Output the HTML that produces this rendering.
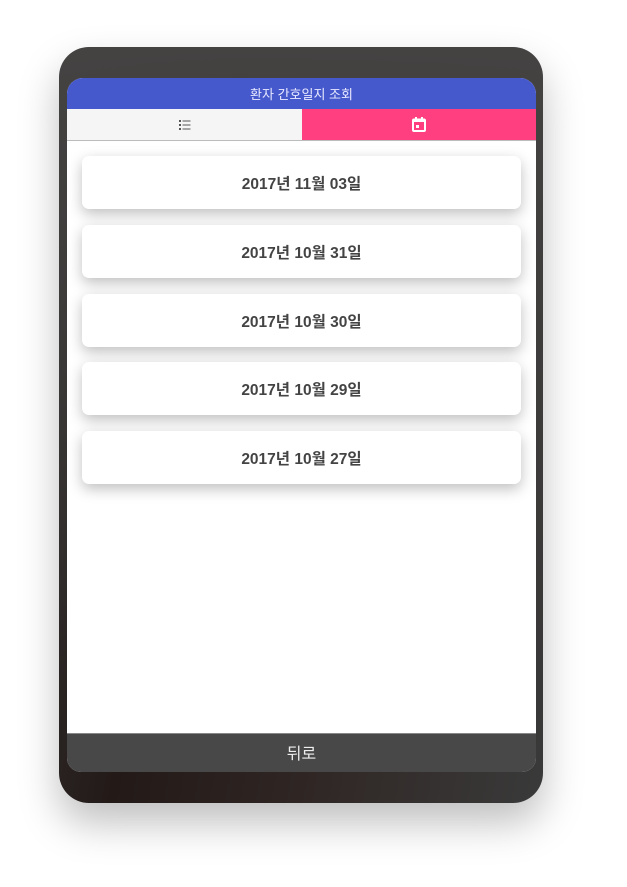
<!DOCTYPE html><html><head><meta charset="utf-8"><style>
body{margin:0;width:627px;height:887px;background:#fff;position:relative;overflow:hidden;font-family:"Liberation Sans","Noto Sans CJK KR",sans-serif}
.dev{position:absolute;left:59px;top:47px;width:484px;height:756px;border-radius:30px;background:linear-gradient(180deg,rgba(68,67,66,1) 0%,rgba(68,67,66,0.6) 40%,rgba(68,67,66,0) 85%),linear-gradient(100deg,#333 0%,#231a18 30%,#2f2624 60%,#3a3a3a 100%);box-shadow:0 20px 40px rgba(0,0,0,.25)}
.scr{position:absolute;left:67px;top:78px;width:469px;height:694px;background:#fff;border-radius:16px 16px 14px 14px;overflow:hidden}
.hd{height:31px;background:#4659cc;color:#e8eaff;font-size:13px;text-align:center;line-height:33px}
.tabs{height:31px;display:flex;border-bottom:1px solid #bbb}
.t1{width:235px;background:#f5f5f5;display:flex;align-items:center;justify-content:center}
.t2{flex:1;background:#ff3f7f;display:flex;align-items:center;justify-content:center}
.card{position:absolute;left:15px;width:439px;height:53px;background:#fff;border-radius:7px;box-shadow:0 5px 14px rgba(0,0,0,.25);text-align:center;line-height:58px;font-weight:bold;font-size:15.5px;color:#444}
.back{position:absolute;left:0;bottom:0;width:469px;height:38px;background:#484848;color:#eee;text-align:center;line-height:42px;font-size:16px;border-top:1px solid #888}
</style></head><body>
<div class="dev"></div>
<div class="scr">
<div class="hd">환자 간호일지 조회</div>
<div class="tabs"><div class="t1"><svg width="12" height="10" viewBox="0 0 12 10"><g fill="#555"><rect x="0" y="0" width="2" height="2"/><rect x="0" y="4" width="2" height="2"/><rect x="0" y="8" width="2" height="2"/><rect x="3.5" y="0.5" width="8" height="1"/><rect x="3.5" y="4.5" width="8" height="1"/><rect x="3.5" y="8.5" width="8" height="1"/></g></svg></div>
<div class="t2"><svg width="14" height="15" viewBox="0 0 14 15"><rect x="1" y="2.5" width="12" height="11.5" rx="1" fill="none" stroke="#fff" stroke-width="2"/><rect x="1" y="2" width="12" height="3" fill="#fff"/><rect x="3" y="0" width="2" height="3" fill="#fff"/><rect x="9" y="0" width="2" height="3" fill="#fff"/><rect x="4" y="8" width="3" height="3" fill="#fff"/></svg></div></div>
<div class="card" style="top:78px">2017년 11월 03일</div>
<div class="card" style="top:147px">2017년 10월 31일</div>
<div class="card" style="top:216px">2017년 10월 30일</div>
<div class="card" style="top:284px">2017년 10월 29일</div>
<div class="card" style="top:353px">2017년 10월 27일</div>
<div class="back">뒤로</div>
</div>
</body></html>
